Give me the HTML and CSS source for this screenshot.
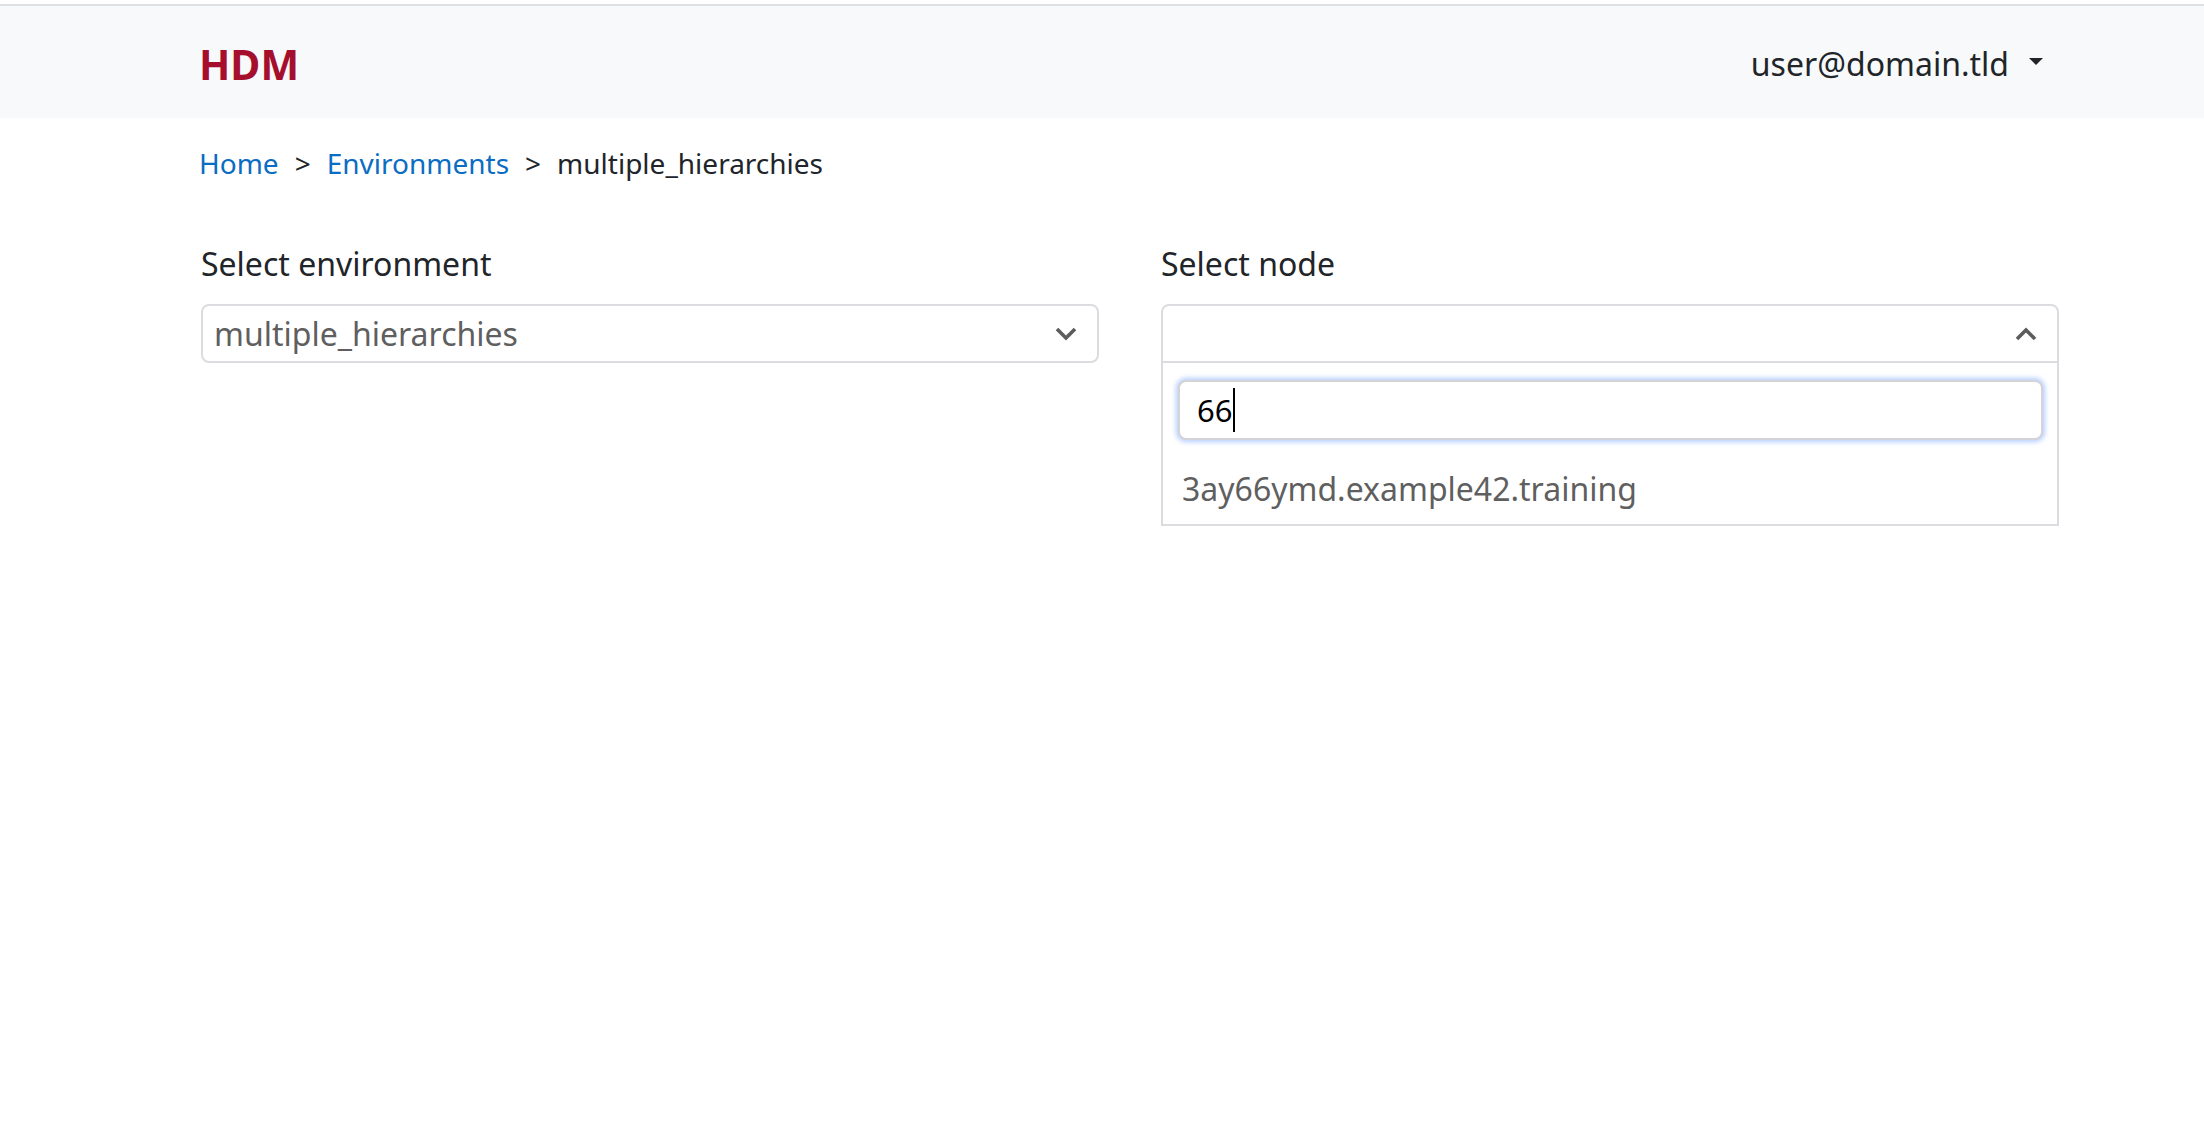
FILE: index.html
```html
<!DOCTYPE html>
<html lang="en">
<head>
<meta charset="utf-8">
<title>HDM</title>
<link rel="stylesheet" href="styles.css">
</head>
<body>
<div class="topline"></div>
<nav class="navbar">
  <div class="container nav-inner">
    <a class="brand" href="#">HDM</a>
    <a class="user-menu" href="#">user@domain.tld<span class="caret"></span></a>
  </div>
</nav>
<main class="container">
  <div class="breadcrumb">
    <a href="#">Home</a><span class="sep">&gt;</span><a href="#">Environments</a><span class="sep">&gt;</span><span class="current">multiple_hierarchies</span>
  </div>
  <div class="row">
    <div class="col">
      <div class="label">Select environment</div>
      <div class="select">
        <span class="select-value">multiple_hierarchies</span>
        <svg class="chev" width="22" height="14" viewBox="0 0 22 14"><path d="M2 2 L11 11 L20 2" fill="none" stroke="#5c5c5c" stroke-width="3.6"/></svg>
      </div>
    </div>
    <div class="col">
      <div class="label">Select node</div>
      <div class="select open">
        <div class="select-head">
          <span class="select-value"></span>
          <svg class="chev" width="22" height="14" viewBox="0 0 22 14"><path d="M2 12 L11 3 L20 12" fill="none" stroke="#5c5c5c" stroke-width="3.6"/></svg>
        </div>
        <div class="dropdown">
          <div class="search"><span class="search-text">66</span><span class="cursor"></span></div>
          <div class="option">3ay66ymd.example42.training</div>
        </div>
      </div>
    </div>
  </div>
</main>
</body>
</html>
```
FILE: styles.css
```css
* { box-sizing: border-box; }
html, body { margin: 0; padding: 0; background: #fff; }
body {
  font-family: "Noto Sans", "Open Sans", sans-serif;
  font-size: 32px;
  line-height: 45px;
  color: #212529;
}
a { text-decoration: none; }
.topline { height: 4px; background: #fff; border-bottom: 2px solid #dfe0e4; box-sizing: content-box; }
.container { width: 1860px; margin-left: 199px; }
.navbar { background: #f8f9fa; height: 112px; }
.nav-inner { height: 112px; display: flex; align-items: center; justify-content: space-between; }
.brand { color: #a50f2d; font-weight: 700; font-size: 41px; line-height: 60px; margin-top: 3px; }
.user-menu { color: #212529; font-size: 32px; padding-right: 16px; display: flex; align-items: center; margin-top: 2px; }
.caret { display: inline-block; width: 0; height: 0; border-top: 7px solid #212529; border-left: 7.5px solid transparent; border-right: 7.5px solid transparent; margin-left: 20px; margin-top: -4px; }
.breadcrumb { margin-top: 23px; display: flex; font-size: 28px; }
.breadcrumb a { color: #0b6cc3; }
.sep { padding: 0 16px; color: #212529; }
.row { display: flex; gap: 62px; margin-top: 55px; padding-left: 2px; }
.col { flex: 1 1 0; }
.label { margin-bottom: 18px; }
.select { border: 2px solid #dcdce0; border-radius: 8px; height: 59px; display: flex; align-items: center; justify-content: space-between; padding: 0 20px 0 11px; color: #5f5f5f; }
.select.open { height: auto; display: block; padding: 0; border-bottom-left-radius: 0; border-bottom-right-radius: 0; }
.select-head { height: 55px; display: flex; align-items: center; justify-content: space-between; padding: 0 20px 0 11px; border-bottom: 2px solid #dcdce0; box-sizing: content-box; }
.dropdown { padding: 17px 14px 13px 15px; }
.search { height: 60px; border: 2px solid #d3d3d8; border-radius: 8px; box-shadow: 0 0 5px 2px rgba(120, 165, 255, 0.55); padding: 0 17px; display: flex; align-items: center; color: #000; background: #fff; }
.search-text { line-height: 44px; font-size: 31px; }
.cursor { display: inline-block; width: 2px; height: 44px; background: #000; margin-left: 1px; }
.option { margin-top: 26px; padding-left: 4px; color: #5f5f5f; }
```
